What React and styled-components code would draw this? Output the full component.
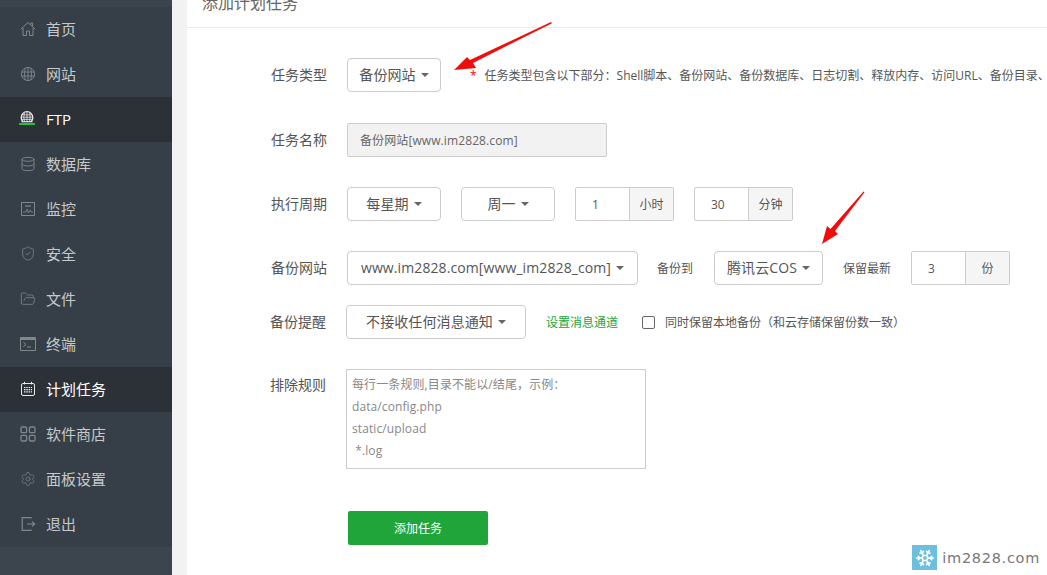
import styled, { createGlobalStyle } from "styled-components";
import { Database, ShieldCheck, FolderOpen, Settings, Snowflake } from "lucide-react";

const GlobalStyle = createGlobalStyle`
  html, body {
    margin: 0;
    height: 100%;
    overflow: hidden;
    background: #f2f2f2;
    font-family: "Open Sans", "Noto Sans CJK SC", sans-serif;
  }
  * { box-sizing: border-box; }
`;

function HomeIcon() {
  return (
    <svg width="16" height="16" viewBox="0 0 16 16" fill="none" stroke="currentColor">
      <path d="M.8 8.2 8 1.5l7.2 6.7M11 3.5V2h1.7v3.3" />
      <path d="M3 7v7.5h3.5V10h3v4.5H13V7" />
    </svg>
  );
}

function GlobeIcon() {
  return (
    <svg width="16" height="16" viewBox="0 0 16 16" fill="none" stroke="currentColor" strokeWidth="0.9">
      <circle cx="8" cy="8" r="6.6" />
      <path d="M8 1.4v13.2M5.2 2.2Q3.6 8 5.2 13.8M10.8 2.2Q12.4 8 10.8 13.8M1.6 6h12.8M1.6 10h12.8" />
    </svg>
  );
}

function FtpIcon() {
  return (
    <svg width="16" height="16" viewBox="0 0 16 16" fill="none" stroke="#e8eaec" strokeWidth="1" overflow="visible">
      <path d="M2.8 10.5A5.8 5.8 0 1 1 11.2 10.5" strokeWidth="1.3" />
      <path d="M1.5 10.7h11" strokeWidth="1.2" />
      <path d="M7 1v9.5M4.4 1.8Q3.3 6 4.4 10.5M9.6 1.8Q10.7 6 9.6 10.5M1.6 6.2h10.8M2.4 3.8h9.2M1.8 8.4h10.4" strokeWidth="0.8" />
      <path d="M-1 13h16" stroke="#1fc13d" strokeWidth="2" />
    </svg>
  );
}

function MonitorIcon() {
  return (
    <svg width="16" height="16" viewBox="0 0 16 16" fill="none" stroke="currentColor">
      <path d="M1.5 1.5h13v13h-13z" />
      <path d="M3 11h3l1-3 1.5 4L10 9l1 2h2" strokeWidth="0.8" />
      <path d="M5 4h6v2H5z" fill="currentColor" stroke="none" opacity="0.6" />
    </svg>
  );
}

function TerminalIcon() {
  return (
    <svg width="16" height="14" viewBox="0 0 16 14" fill="none" stroke="currentColor">
      <path d="M.5.5h15v13H.5z" />
      <path d="M.5 2h15" strokeWidth="2" />
      <path d="M3.5 5.5l2.5 2-2.5 2M7 10h4" />
    </svg>
  );
}

function CalendarIcon() {
  return (
    <svg width="16" height="16" viewBox="0 0 16 16" fill="none" stroke="#e8eaec">
      <rect x="1.5" y="2.5" width="13" height="12" rx="1.5" />
      <path d="M4.5 .8v2.6M11.5 .8v2.6" />
      <path d="M4 6.5h8M4 8.7h8M4 10.9h8" strokeWidth="1.2" strokeDasharray="1.5 .8" />
    </svg>
  );
}

function GridIcon() {
  return (
    <svg width="16" height="16" viewBox="0 0 16 16" fill="none" stroke="currentColor" strokeWidth="1.3">
      <rect x="1" y="1" width="5.6" height="5.6" rx="1.2" />
      <rect x="9.4" y="1" width="5.6" height="5.6" rx="1.2" />
      <rect x="1" y="9.4" width="5.6" height="5.6" rx="1.2" />
      <rect x="9.4" y="9.4" width="5.6" height="5.6" rx="1.2" />
    </svg>
  );
}

function ExitIcon() {
  return (
    <svg width="16" height="16" viewBox="0 0 16 16" fill="none" stroke="currentColor" strokeWidth="1.2">
      <path d="M11 2.6V1.6H2.2v12.8H11v-1" />
      <path d="M7 8h7.5M12 5.6 14.6 8 12 10.4" />
    </svg>
  );
}

const menu = [
  { name: "首页", icon: <HomeIcon /> },
  { name: "网站", icon: <GlobeIcon /> },
  { name: "FTP", icon: <FtpIcon />, active: true },
  { name: "数据库", icon: <Database size={16} strokeWidth={1.4} /> },
  { name: "监控", icon: <MonitorIcon /> },
  { name: "安全", icon: <ShieldCheck size={17} strokeWidth={1.2} /> },
  { name: "文件", icon: <FolderOpen size={16} strokeWidth={1.2} /> },
  { name: "终端", icon: <TerminalIcon /> },
  { name: "计划任务", icon: <CalendarIcon />, active: true },
  { name: "软件商店", icon: <GridIcon /> },
  { name: "面板设置", icon: <Settings size={16} strokeWidth={1} /> },
  { name: "退出", icon: <ExitIcon /> },
];

const placeholder = "每行一条规则,目录不能以/结尾，示例：\ndata/config.php\nstatic/upload\n *.log";

function Drop({ width, children }) {
  return (
    <Select $width={width}>
      {children}
      <Caret />
    </Select>
  );
}

function Unit({ value, unit }) {
  return (
    <UnitGroup>
      <UnitInput value={value} readOnly />
      <UnitAddon>{unit}</UnitAddon>
    </UnitGroup>
  );
}

export default function App() {
  return (
    <Page>
      <GlobalStyle />
      <Sidebar>
        <MenuList>
          {menu.map((item) => (
            <MenuItem key={item.name} $active={item.active}>
              <MenuIcon $active={item.active}>{item.icon}</MenuIcon>
              {item.name}
            </MenuItem>
          ))}
        </MenuList>
      </Sidebar>
      <Main>
        <Card>
          <CardTitle>添加计划任务</CardTitle>
          <Form>
            <Row>
              <Label>任务类型</Label>
              <Drop width={94}>备份网站</Drop>
              <Hint>
                <Star>*</Star>任务类型包含以下部分：Shell脚本、备份网站、备份数据库、日志切割、释放内存、访问URL、备份目录、
              </Hint>
            </Row>
            <Row $top={31}>
              <Label>任务名称</Label>
              <NameInput value="备份网站[www.im2828.com]" readOnly />
            </Row>
            <Row $top={30}>
              <Label>执行周期</Label>
              <Drop width={94}>每星期</Drop>
              <Drop width={94}>周一</Drop>
              <Unit value="1" unit="小时" />
              <Unit value="30" unit="分钟" />
            </Row>
            <Row $top={30}>
              <Label>备份网站</Label>
              <Drop width={291}>www.im2828.com[www_im2828_com]</Drop>
              <InlineLabel $width={37} $pull={-1}>备份到</InlineLabel>
              <Drop width={109}>腾讯云COS</Drop>
              <InlineLabel $width={48}>保留最新</InlineLabel>
              <Unit value="3" unit="份" />
            </Row>
            <Row $top={20} $shift={-1}>
              <Label>备份提醒</Label>
              <Drop width={180}>不接收任何消息通知</Drop>
              <ChannelLink>设置消息通道</ChannelLink>
              <CheckLabel>
                <CheckBox type="checkbox" />
                同时保留本地备份（和云存储保留份数一致）
              </CheckLabel>
            </Row>
            <Row $top={30} $shift={-1} $align="flex-start">
              <Label $tall>排除规则</Label>
              <RulesArea placeholder={placeholder} />
            </Row>
            <SubmitRow>
              <Submit>添加任务</Submit>
            </SubmitRow>
          </Form>
        </Card>
      </Main>

      <ArrowOne width="100" height="50" viewBox="0 0 100 50">
        <path d="M98 1 L99 2.2 L20 42 L23 47 L1 49 L14 36 L17 39z" fill="#f20d0d" />
      </ArrowOne>
      <ArrowTwo width="44" height="54" viewBox="0 0 44 54">
        <path d="M42.5 .5 L43.5 1.2 L14 40 L17 43 L1 53 L6 35 L9.5 38z" fill="#f20d0d" />
      </ArrowTwo>

      <Watermark>
        <WatermarkLogo>
          <Snowflake size={20} color="#fff" strokeWidth={2} />
        </WatermarkLogo>
        im2828.com
      </Watermark>
    </Page>
  );
}

const Page = styled.div`
  position: relative;
  display: flex;
  width: 1047px;
  height: 575px;
  overflow: hidden;
  background: #f2f2f2;
`;

const Sidebar = styled.aside`
  flex: 0 0 172px;
  padding-top: 7px;
  background: #3c444d;
`;

const MenuList = styled.nav`
  display: flex;
  flex-direction: column;
  background: #363f47;
`;

const MenuItem = styled.div`
  display: flex;
  align-items: center;
  height: 45px;
  padding: 0 0 2px 20px;
  font-size: 15px;
  color: ${(p) => (p.$active ? "#ffffff" : "#c5c9cc")};
  background: ${(p) => (p.$active ? "#2c3138" : "transparent")};
`;

const MenuIcon = styled.span`
  display: flex;
  align-items: center;
  justify-content: center;
  width: 16px;
  height: 16px;
  margin-right: 10px;
  color: #80878d;
`;

const Main = styled.main`
  flex: 1;
  padding-left: 15px;
`;

const Card = styled.section`
  height: 600px;
  margin-top: -20px;
  background: #fff;
`;

const CardTitle = styled.h2`
  height: 48px;
  margin: 0;
  padding: 12px 0 0 15px;
  border-bottom: 1px solid #ececec;
  font-size: 16px;
  line-height: 22px;
  font-weight: 400;
  color: #666;
`;

const Form = styled.div`
  padding: 30px 0 0 84px;
`;

const Row = styled.div`
  display: flex;
  align-items: ${(p) => p.$align || "center"};
  gap: 20px;
  margin-top: ${(p) => p.$top || 0}px;
  margin-left: ${(p) => p.$shift || 0}px;
  white-space: nowrap;
`;

const Label = styled.label`
  flex: 0 0 56px;
  padding-top: ${(p) => (p.$tall ? "5px" : "0")};
  font-size: 14px;
  line-height: 22px;
  color: #555;
`;

const Select = styled.div`
  display: flex;
  align-items: center;
  justify-content: center;
  flex: 0 0 ${(p) => p.$width}px;
  height: 34px;
  padding-bottom: 2px;
  border: 1px solid #ccc;
  border-radius: 4px;
  background: #fff;
  font-size: 14px;
  letter-spacing: 0.1px;
  color: #555;
`;

const Caret = styled.span`
  width: 0;
  height: 0;
  margin: 2px 0 0 5px;
  border-top: 4px solid #666;
  border-left: 4px solid transparent;
  border-right: 4px solid transparent;
`;

const Hint = styled.span`
  margin-left: 9px;
  font-size: 12px;
  color: #555;
`;

const Star = styled.span`
  margin-right: 8px;
  color: #f00;
`;

const NameInput = styled.input`
  width: 260px;
  height: 34px;
  padding: 0 12px;
  border: 1px solid #ccc;
  border-radius: 2px;
  outline: none;
  background: #f2f2f2;
  font: inherit;
  font-size: 12px;
  letter-spacing: 0.1px;
  color: #666;
`;

const UnitGroup = styled.div`
  display: flex;
  height: 34px;
`;

const UnitInput = styled.input`
  width: 55px;
  padding: 0 0 0 16px;
  border: 1px solid #ccc;
  border-radius: 2px 0 0 2px;
  outline: none;
  font: inherit;
  font-size: 12px;
  color: #555;
`;

const UnitAddon = styled.span`
  display: flex;
  align-items: center;
  justify-content: center;
  width: 44px;
  border: 1px solid #ccc;
  border-left: 0;
  border-radius: 0 2px 2px 0;
  background: #f5f5f5;
  font-size: 12px;
  color: #555;
`;

const InlineLabel = styled.span`
  flex: 0 0 ${(p) => p.$width}px;
  margin-left: ${(p) => p.$pull || 0}px;
  font-size: 12px;
  color: #555;
`;

const ChannelLink = styled.a`
  font-size: 12px;
  color: #20a53a;
`;

const CheckLabel = styled.label`
  display: flex;
  align-items: center;
  margin-left: 4px;
  font-size: 12px;
  color: #555;
`;

const CheckBox = styled.input`
  appearance: none;
  width: 13px;
  height: 13px;
  margin: 0 10px 0 0;
  border: 1px solid #666;
  border-radius: 2px;
  background: #fff;
`;

const RulesArea = styled.textarea`
  width: 300px;
  height: 100px;
  padding: 4px 5px;
  border: 1px solid #ccc;
  border-radius: 0;
  outline: none;
  resize: none;
  font: inherit;
  font-size: 12px;
  line-height: 22px;
  letter-spacing: 0.1px;
  &::placeholder {
    color: #888;
    opacity: 1;
  }
`;

const SubmitRow = styled.div`
  margin: 42px 0 0 77px;
`;

const Submit = styled.button`
  width: 140px;
  height: 34px;
  border: 0;
  border-radius: 2px;
  background: #20a53a;
  font: inherit;
  font-size: 12px;
  color: #fff;
`;

const ArrowOne = styled.svg`
  position: absolute;
  left: 453px;
  top: 21px;
`;

const ArrowTwo = styled.svg`
  position: absolute;
  left: 821px;
  top: 191px;
`;

const Watermark = styled.div`
  position: absolute;
  right: 7px;
  bottom: 5px;
  display: flex;
  align-items: center;
  gap: 5px;
  font-family: "DejaVu Sans", sans-serif;
  font-size: 14.5px;
  letter-spacing: 0.7px;
  color: #777;
`;

const WatermarkLogo = styled.span`
  display: flex;
  align-items: center;
  justify-content: center;
  width: 25px;
  height: 25px;
  background: #6cc0de;
`;
